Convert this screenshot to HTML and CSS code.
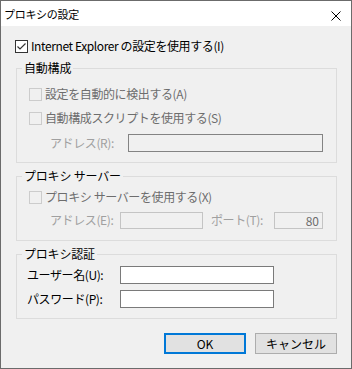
FILE: index.html
```html
<!DOCTYPE html>
<html lang="ja">
<head>
<meta charset="utf-8">
<title>プロキシの設定</title>
<link rel="stylesheet" href="styles.css">
</head>
<body>
<div class="window">
  <div class="titlebar">
    <span class="title">プロキシの設定</span>
    <svg class="close" width="10" height="10" viewBox="0 0 10 10"><path d="M0.5 0.5 L9.5 9.5 M9.5 0.5 L0.5 9.5" stroke="#000" stroke-width="1" fill="none"/></svg>
  </div>
  <div class="content">
    <div class="row ie">
      <span class="cb on"><svg width="11" height="11" viewBox="0 0 11 11"><path d="M1.5 5.5 L4 8 L9.5 2.5" stroke="#333" stroke-width="1.2" fill="none"/></svg></span>
      <span class="lbl">Internet Explorer の設定を使用する(I)</span>
    </div>

    <fieldset class="group g1">
      <legend>自動構成</legend>
      <div class="row chk first">
        <span class="cb off"></span><span class="lbl dis">設定を自動的に検出する(A)</span>
      </div>
      <div class="row chk second">
        <span class="cb off"></span><span class="lbl dis">自動構成スクリプトを使用する(S)</span>
      </div>
      <div class="row field addr-r">
        <span class="flabel dis2 wr">アドレス(R):</span>
        <span class="input dark-dis wr-in"></span>
      </div>
    </fieldset>

    <fieldset class="group g2">
      <legend>プロキシ サーバー</legend>
      <div class="row chk first2">
        <span class="cb off"></span><span class="lbl dis">プロキシ サーバーを使用する(X)</span>
      </div>
      <div class="row field addr-e">
        <span class="flabel dis2 we">アドレス(E):</span>
        <span class="input light-dis we-in"></span>
        <span class="flabel dis2 port-l">ポート(T):</span>
        <span class="input light-dis port-in">80</span>
      </div>
    </fieldset>

    <fieldset class="group g3">
      <legend>プロキシ認証</legend>
      <div class="row field auth first3">
        <span class="flabel wu">ユーザー名(U):</span>
        <span class="input on-in wu-in"></span>
      </div>
      <div class="row field auth second3">
        <span class="flabel wu">パスワード(P):</span>
        <span class="input on-in wu-in"></span>
      </div>
    </fieldset>

    <div class="buttons">
      <button class="btn default">OK</button>
      <button class="btn">キャンセル</button>
    </div>
  </div>
</div>
</body>
</html>
```

FILE: styles.css
```css
* { box-sizing: border-box; }
html, body { margin: 0; padding: 0; background: #f0f0f0; }
body {
  font-family: "Noto Sans CJK JP", "Noto Sans", sans-serif;
  font-size: 12px;
  line-height: 16px;
  color: #000;
}
.window {
  width: 352px;
  height: 369px;
  border: 1px solid #6b6b6b;
  background: #f0f0f0;
  display: flex;
  flex-direction: column;
}
.titlebar {
  height: 25px;
  background: #fff;
  display: flex;
  align-items: center;
  padding-left: 3px;
  flex: none;
}
.title { font-size: 11px; letter-spacing: -0.3px; flex: 1; }
.close { align-self: flex-start; margin-top: 10px; margin-right: 10px; }

.content { padding: 10px 0 0 15px; }

.row { display: flex; align-items: center; }
.ie { height: 20px; margin-left: -1px; }
.cb {
  width: 13px; height: 13px; flex: none;
  border: 1px solid #333;
  background: #fff;
  display: flex; align-items: center; justify-content: center;
  margin-right: 3px;
}
.cb svg { display: block; }
.cb.off { border-color: #cccccc; background: #f0f0f0; }
.lbl { white-space: nowrap; letter-spacing: -0.4px; }
.dis { color: #6d6d6d; }
.dis2 { color: #a0a0a0; }

.group {
  margin: 0;
  padding: 0;
  min-width: 0;
  width: 321px;
  border: 1px solid #dcdcdc;
}
.group legend {
  margin-left: 5px;
  padding: 0 2px;
  line-height: 16px;
  letter-spacing: -0.2px;
}
.g1 { margin-top: 4px; padding-bottom: 10px; }
.g2 { margin-top: 5px; padding-bottom: 11px; }
.g3 { margin-top: 5px; padding-bottom: 10px; }

.chk { height: 20px; margin-left: 12px; }
.first { margin-top: 8px; }
.second { margin-top: 4px; }
.first2 { margin-top: 3px; }

.field { height: 18px; }
.addr-r { margin-top: 6px; margin-left: 33px; }
.addr-e { margin-top: 4px; margin-left: 33px; }
.auth { margin-left: 10px; }
.first3 { margin-top: 4px; }
.second3 { margin-top: 6px; }

.flabel { white-space: nowrap; letter-spacing: -0.4px; flex: none; }
.wr { width: 78px; }
.we { width: 70px; }
.port-l { width: 63px; margin-left: 8px; }
.wu { width: 93px; }

.input {
  height: 18px;
  border: 1px solid #7a7a7a;
  flex: none;
  display: block;
}
.dark-dis { background: #f0f0f0; border-color: #838383; }
.light-dis { background: #f0f0f0; border-color: #c4c4c4; height: 17px; }
.on-in { background: #fff; border-color: #7a7a7a; }
.wr-in { width: 195px; }
.we-in { width: 83px; }
.port-in {
  width: 49px;
  text-align: right;
  padding-right: 3px;
  color: #6d6d6d;
  font-size: 12px;
  line-height: 15px;
}
.wu-in { width: 154px; }

.buttons {
  width: 321px;
  margin-top: 14px;
  display: flex;
  justify-content: flex-end;
  gap: 9px;
}
.btn {
  width: 82px;
  height: 21px;
  border: 1px solid #adadad;
  background: #e1e1e1;
  font-family: "Noto Sans CJK JP", "Noto Sans", sans-serif;
  font-size: 12px;
  line-height: 16px;
  color: #000;
  padding: 0;
  margin: 0;
}
.btn.default { border: 2px solid #0078d7; }
```
